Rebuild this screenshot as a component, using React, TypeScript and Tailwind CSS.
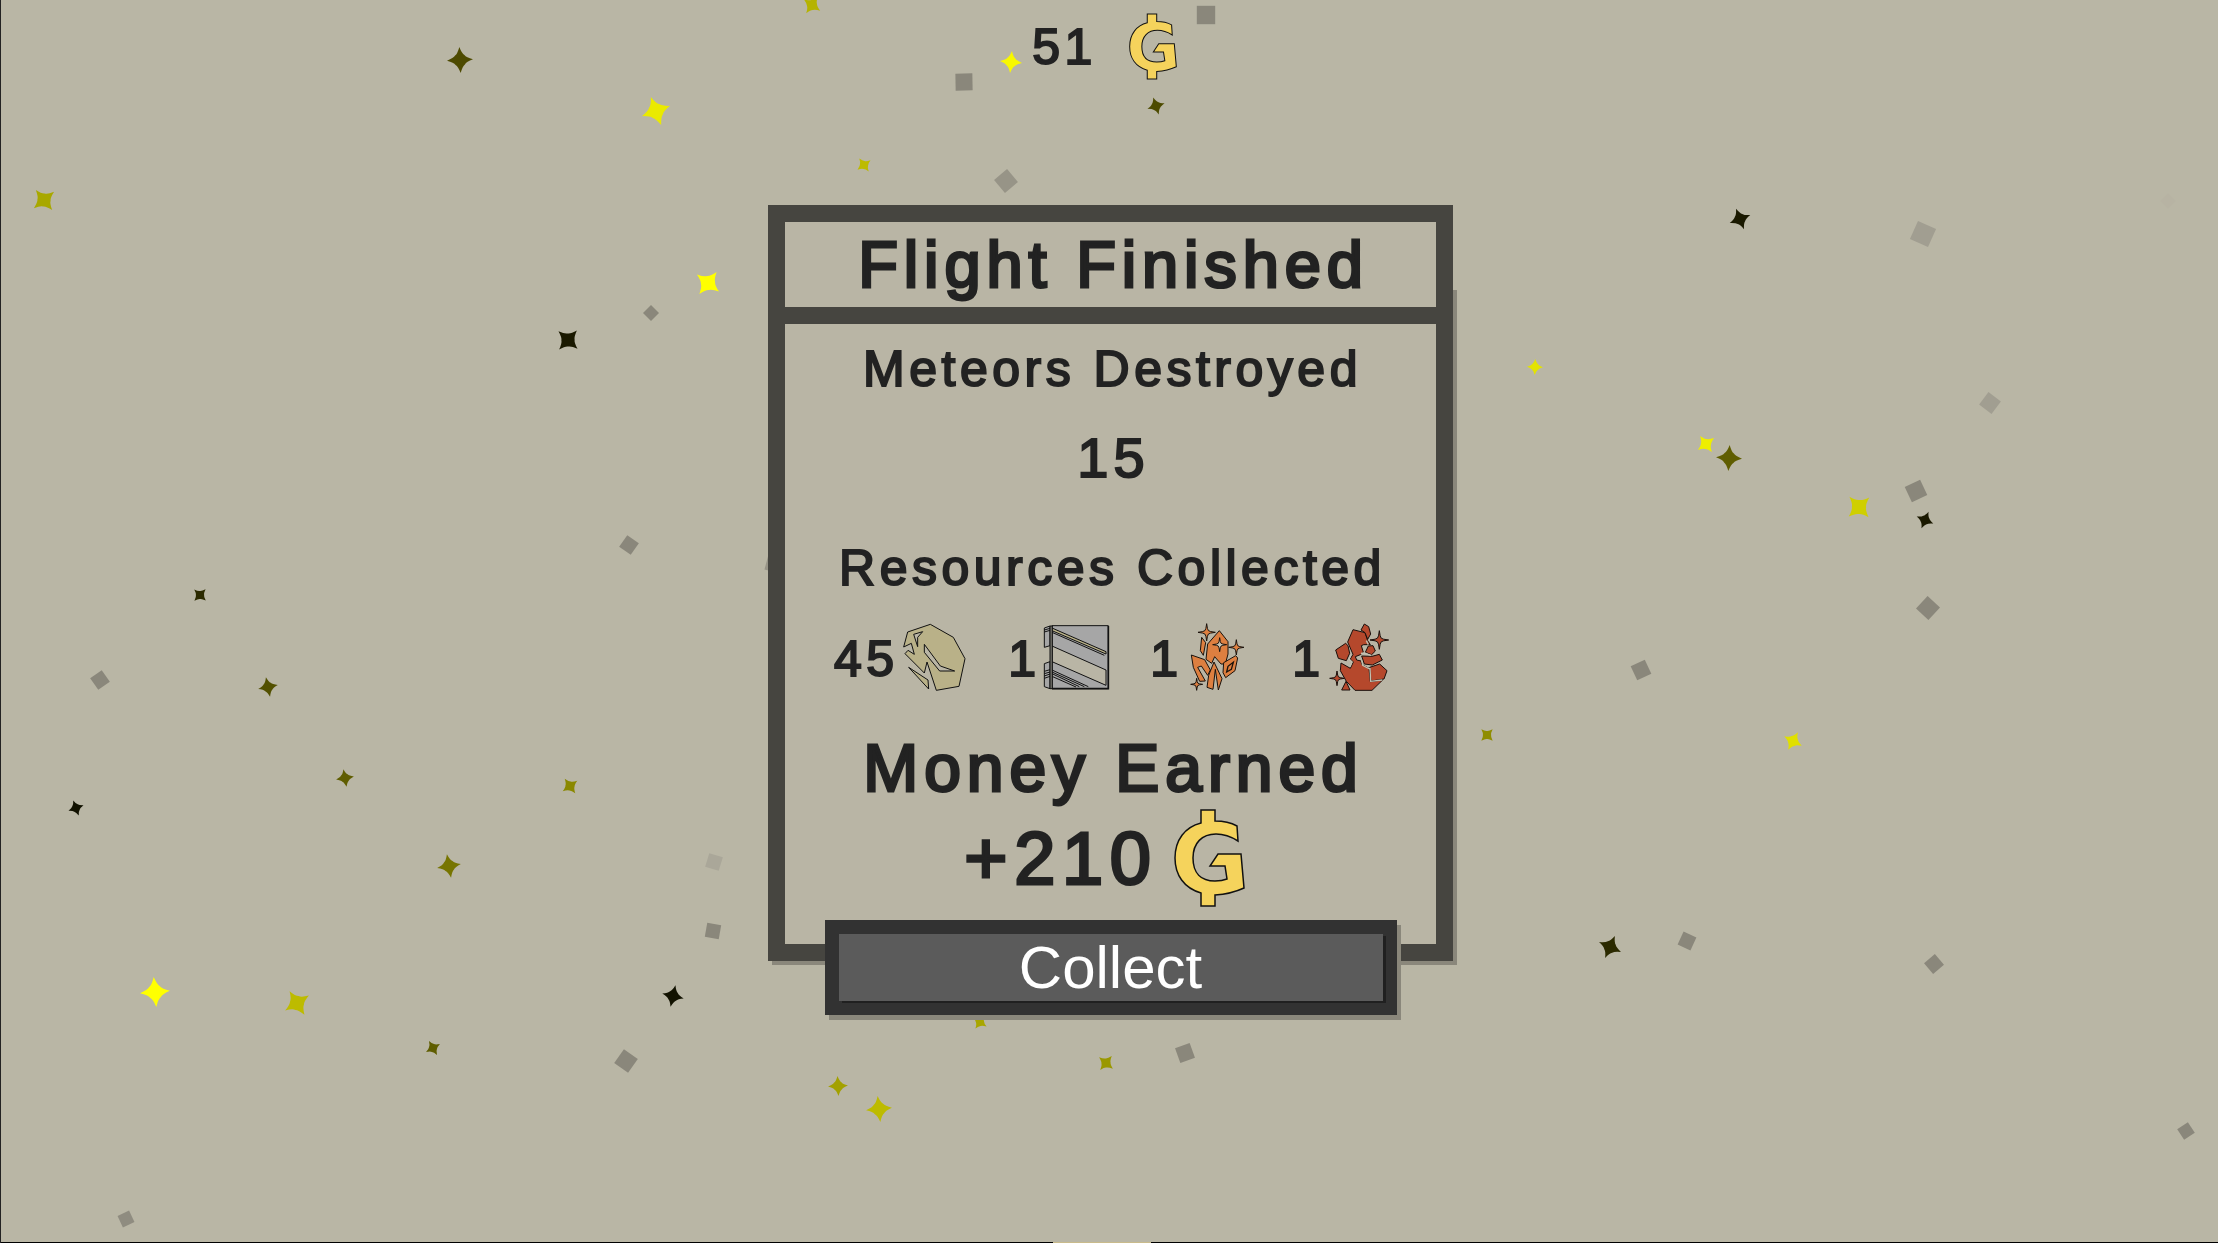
import type { ReactNode } from "react";

type Particle = [x: number, y: number, radius: number, turn: number, tone: string];

const STARS: Particle[] = [
  [460, 60, 13, -3, "#4d4a00"],
  [656, 111, 15, -20, "#eaea00"],
  [44, 200, 13, -39, "#a8a800"],
  [708, 283, 14, 38, "#ffff00"],
  [568, 340, 13, 43, "#1a1900"],
  [200, 595, 8, 44, "#2b2a00"],
  [268, 687, 10, -12, "#525000"],
  [345, 778, 9, -10, "#5f5d00"],
  [570, 786, 9, -36, "#8a8800"],
  [76, 808, 8, -20, "#111100"],
  [449, 866, 12, -10, "#777500"],
  [155, 992, 15, -5, "#ffff00"],
  [297, 1003, 14, -32, "#bdbb00"],
  [433, 1048, 8, -30, "#5f5d00"],
  [673, 996, 11, 13, "#121200"],
  [1740, 219, 11, -21, "#1a1900"],
  [1535, 367, 8, 2, "#e3e300"],
  [1706, 444, 10, -36, "#eeee00"],
  [1729, 458, 13, 3, "#5f5d00"],
  [1859, 507, 14, 47, "#cfcf00"],
  [1925, 520, 9, 23, "#1a1900"],
  [1487, 735, 8, 45, "#8f8d00"],
  [1793, 741, 10, 29, "#e0e000"],
  [1011, 62, 11, 5, "#f8f800"],
  [1156, 106, 9, -18, "#4d4b00"],
  [812, 5, 10, 35, "#b5b300"],
  [864, 165, 8, -36, "#bdbb00"],
  [1610, 947, 12, 24, "#2b2a00"],
  [980, 1022, 8, 35, "#a8a600"],
  [1106, 1063, 9, 40, "#9a9800"],
  [838, 1086, 10, -3, "#a3a100"],
  [879, 1109, 13, -6, "#bdbb00"],
];

const DUST: Particle[] = [
  [651, 313, 8, 0, "#8a877b"],
  [629, 545, 10, -10, "#8a877b"],
  [100, 680, 10, 10, "#8a877b"],
  [714, 862, 10, -28, "#aaa799"],
  [713, 931, 10, -35, "#8a877b"],
  [626, 1061, 12, -10, "#8a877b"],
  [126, 1219, 9, 20, "#8f8c80"],
  [1923, 234, 14, -21, "#a19e91"],
  [1990, 403, 11, -8, "#a19e91"],
  [1916, 491, 12, 20, "#8a877b"],
  [1928, 608, 12, -2, "#8a877b"],
  [1641, 670, 11, 20, "#8a877b"],
  [2168, 201, 8, 0, "#b7b3a3"],
  [964, 82, 12, 44, "#8a877b"],
  [1206, 15, 13, 45, "#8a877b"],
  [1006, 181, 12, 5, "#979487"],
  [1687, 941, 10, -20, "#8a877b"],
  [1934, 964, 10, 5, "#8a877b"],
  [2186, 1131, 9, 12, "#8a877b"],
  [1185, 1053, 11, 25, "#8a877b"],
  [774, 564, 11, -30, "#979487"],
];

const STAR_PATH =
  "M0-1Q.17-.48.36-.36Q.48-.17 1 0Q.48.17.36.36Q.17.48 0 1Q-.17.48-.36.36Q-.48.17-1 0Q-.48-.17-.36-.36Q-.17-.48 0-1Z";
const DIAMOND_PATH = "M0-1L1 0L0 1L-1 0Z";
const SPARKLE_PATH =
  "M0-1Q.08-.3.2-.2Q.3-.08 1 0Q.3.08.2.2Q.08.3 0 1Q-.08.3-.2.2Q-.3.08-1 0Q-.3-.08-.2-.2Q-.08-.3 0-1Z";

function ParticleField() {
  return (
    <svg
      className="absolute inset-0 h-full w-full"
      viewBox="1 0 2217 1243"
      preserveAspectRatio="xMidYMid slice"
      aria-hidden="true"
    >
      {DUST.map(([x, y, r, turn, tone]) => (
        <path key={`${x}-${y}`} d={DIAMOND_PATH} fill={tone} transform={`translate(${x} ${y}) rotate(${turn}) scale(${r})`} />
      ))}
      {STARS.map(([x, y, r, turn, tone]) => (
        <path key={`${x}-${y}`} d={STAR_PATH} fill={tone} transform={`translate(${x} ${y}) rotate(${turn}) scale(${r})`} />
      ))}
    </svg>
  );
}

function Coin({ className }: { className: string }) {
  return (
    <svg className={className} viewBox="0 0 71 98" role="img" aria-label="Coins">
      <path
        d="M27 1H41V12Q54 12 63 17L64 32Q53 25 42 25C28 25 19 34 19 49C19 64 27 72 41 72Q48 72 53 70L51 57H36L44 45H67L70 79Q57 85 41 86V97H27V84C10 79 1 66 1 49C1 31 11 18 27 14Z"
        fill="#f5d35c"
        stroke="#111"
        strokeWidth="1.5"
      />
    </svg>
  );
}

function Sparkle({ x, y, r, fill }: { x: number; y: number; r: number; fill: string }) {
  return (
    <path
      d={SPARKLE_PATH}
      fill={fill}
      strokeWidth="1"
      vectorEffect="non-scaling-stroke"
      transform={`translate(${x} ${y}) scale(${r})`}
    />
  );
}

const ICON = "size-[70px] shrink-0 overflow-visible";

function Rock() {
  return (
    <svg className={ICON} viewBox="24 42 210 210" stroke="#111" strokeWidth="3" role="img" aria-label="Rock">
      <path
        fill="#b9b188"
        fillRule="evenodd"
        d="M50 66L118 43L187 82L222 146L204 229L136 241L108 156L100 189L42 131L51 121L70 133L61 100L38 111ZM68 73L95 65L80 82V110ZM100 103L148 168L191 183H146L100 127Z"
      />
      <path fill="#b9b188" d="M53 172L111 210L113 237Z" />
    </svg>
  );
}

function Metal() {
  return (
    <svg className={ICON} viewBox="30 42 210 210" stroke="#111" strokeWidth="3" role="img" aria-label="Metal">
      <path fill="#a6a6a6" d="M63 47H232V236H63Z" />
      <path fill="#b9b5a5" d="M63 108L225 180V226L63 155Z" />
      <path fill="#b9b188" d="M63 54L225 125V132L63 62Z" />
      <path fill="none" d="M63 67L220 136M63 180L172 230M63 186L160 230M63 191L145 230M63 199L135 231" />
      <path fill="#a6a6a6" d="M40 54L57 48V107L40 112ZM40 161L57 155V236L40 230Z" />
      <path fill="none" d="M40 60L57 55L63 57M40 66L57 61M40 184L57 179L63 181M40 191L57 186M40 198L57 192L63 195M40 205L57 199" />
      <path fill="#77766f" d="M57 48H64V236H57Z" />
      <path fill="none" strokeWidth="5" d="M232 48V236H63" />
    </svg>
  );
}

function Crystals() {
  const tone = "#dd7f40";
  return (
    <svg className={ICON} viewBox="36 42 210 210" stroke="#1a120c" strokeWidth="3" role="img" aria-label="Crystals">
      <Sparkle x={107} y={67} r={26} fill={tone} />
      <Sparkle x={196} y={112} r={23} fill={tone} />
      <Sparkle x={77} y={223} r={18} fill={tone} />
      <g fill={tone}>
        <path d="M145 62L171 95V132L163 162H150L131 140L122 160L105 148L110 102Z" />
        <path d="M92 82L104 98L97 136L88 122Z" />
        <path d="M61 135L101 149L118 180L110 196L91 168L80 172L103 213L86 214L67 172Z" />
        <path d="M129 156L153 206L142 240L133 178L126 238L108 232L113 196Z" />
        <path d="M158 158L194 137L200 144L192 182L164 203L156 188Z" />
        <path d="M187 157L181 178L167 186L171 169Z" strokeWidth="4" />
      </g>
      <Sparkle x={146} y={104} r={21} fill="#c9c5b5" />
    </svg>
  );
}

function RedOre() {
  const tone = "#b5482c";
  return (
    <svg className={ICON} viewBox="42 42 210 210" stroke="#1a0f0b" strokeWidth="3" role="img" aria-label="Red ore">
      <Sparkle x={205} y={90} r={28} fill={tone} />
      <Sparkle x={78} y={205} r={22} fill={tone} />
      <g fill={tone}>
        <path d="M126 59L162 68L170 92L178 104L158 104L151 107L157 127L148 134L133 140L137 150L150 153L152 163L174 175L178 215L215 210L183 241H132L106 214L88 182L90 159L118 175L127 156L118 147L126 133L110 96Z" />
        <path d="M160 42L173 50L179 72L170 88L162 68L150 60Z" />
        <path d="M104 100L111 107L116 130L106 152L82 145L74 120Z" />
        <path d="M172 108L186 107L193 123L182 134L163 127Z" />
        <path d="M152 138L183 139L205 133L214 150L184 165L160 162Z" />
        <path d="M176 172L206 162L228 182L219 207L180 213Z" />
        <path d="M105 214L117 240H92Z" />
      </g>
      <path
        d="M120 134L114 148L123 156L117 170M152 152L155 166L176 177M177 174L179 214L214 210M150 130L160 129L180 136M166 92L172 104"
        fill="none"
        stroke="#c4c0b0"
        strokeWidth="4"
      />
    </svg>
  );
}

const INK = "tracking-[0.09em] text-[#222] [-webkit-text-stroke:2px_#222]";
const HEAVY_INK = "tracking-[0.09em] text-[#222] [-webkit-text-stroke:3px_#222]";

function Resource({ count, children }: { count: number; children: ReactNode }) {
  return (
    <li className="flex items-center justify-end">
      <span className={`text-[50px] leading-[60px] ${INK}`}>{count}</span>
      {children}
    </li>
  );
}

export default function App() {
  return (
    <div className="relative flex min-h-screen flex-col overflow-hidden border-l border-l-[#222] bg-[#b9b6a5] font-['Liberation_Sans',Arial,sans-serif]">
      <ParticleField />

      <div className="relative flex grow flex-col items-center pl-0.5">
        <header className="flex items-center gap-8 pt-[13px] pr-3">
          <span className={`text-[50px] leading-[60px] ${INK}`}>51</span>
          <Coin className="h-[67px] w-12" />
        </header>

        <main className="mt-[125px] flex w-[685px] max-w-full flex-col items-center">
          <section className="relative w-full bg-[#b9b5a5]">
            <div className="absolute inset-x-0 top-[81px] bottom-0 shadow-[4px_4px_0_#8a877b]" />
            <div className="relative border-[17px] border-[#464540]">
              <h1 className={`border-b-[17px] border-[#464540] bg-[#b9b5a5] pl-1.5 text-center text-[65px] leading-[85px] ${HEAVY_INK}`}>
                Flight Finished
              </h1>
              <div className="flex flex-col items-center bg-[#b9b5a5] pt-[15px] pb-9">
                <h2 className={`pl-1 text-[50px] leading-[60px] ${INK}`}>Meteors Destroyed</h2>
                <p className={`mt-[19px] pl-1.5 text-[56px] leading-[80px] ${INK}`}>15</p>
                <h2 className={`mt-10 pl-1 text-[50px] leading-[60px] ${INK}`}>Resources Collected</h2>
                <ul className="mt-[26px] grid w-[568px] grid-cols-4">
                  <Resource count={45}><Rock /></Resource>
                  <Resource count={1}><Metal /></Resource>
                  <Resource count={1}><Crystals /></Resource>
                  <Resource count={1}><RedOre /></Resource>
                </ul>
                <h2 className={`mt-[34px] pl-1.5 text-[66px] leading-[80px] ${HEAVY_INK}`}>Money Earned</h2>
                <div className="flex h-[100px] items-center gap-4 pr-3">
                  <span className={`text-[74px] ${HEAVY_INK}`}>+210</span>
                  <Coin className="h-[98px] w-[71px]" />
                </div>
              </div>
            </div>
          </section>

          <button
            type="button"
            className="relative -mt-[41px] w-[572px] max-w-full cursor-pointer border-[14px] border-[#323232] bg-[#5b5b5b] text-center text-[60px] leading-[67px] text-white shadow-[4px_5px_0_#8a877b]"
          >
            <span className="block shadow-[3px_2px_0_#202020]">Collect</span>
          </button>
        </main>
      </div>

      <div className="relative flex h-px justify-center bg-black pr-4">
        <div className="w-[98px] bg-[#c9bb8c]" />
      </div>
    </div>
  );
}
